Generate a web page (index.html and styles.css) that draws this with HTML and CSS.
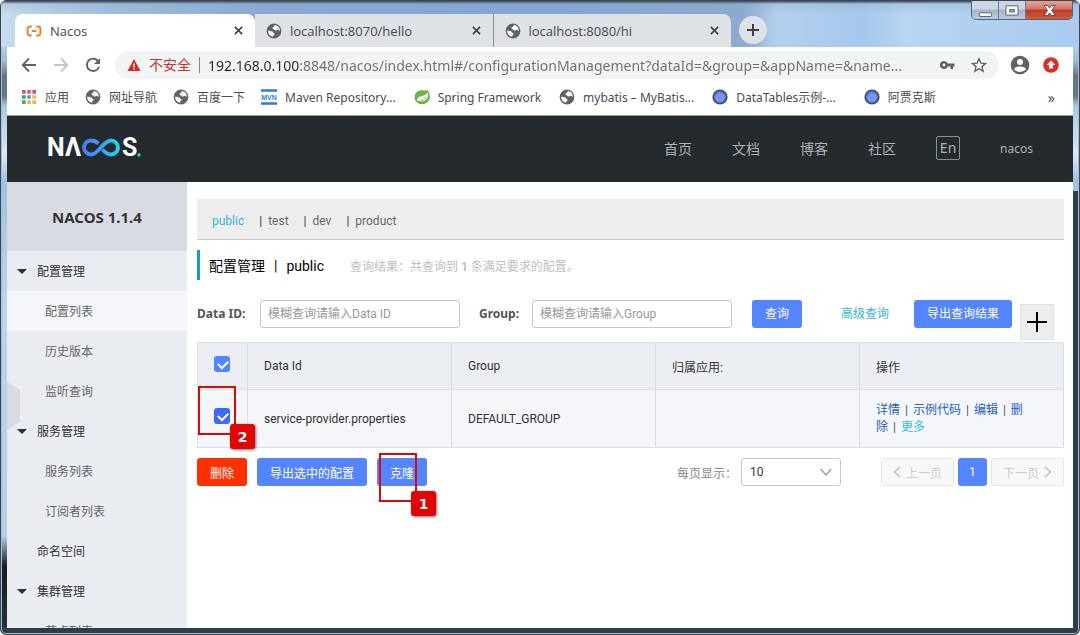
FILE: index.html
```html
<!DOCTYPE html>
<html lang="zh-CN">
<head>
<meta charset="utf-8">
<title>Nacos</title>
<link rel="stylesheet" href="styles.css">
</head>
<body>
<svg class="defs" aria-hidden="true">
  <symbol id="globe" viewBox="0 0 16 16">
    <circle cx="8" cy="8" r="7.4" fill="#5f6368"/>
    <path d="M9.2 1.9C8 2.4 8.6 3.5 7.3 4 6 4.500 6.300 5.400 7.200 5.900 8.500 6.500 8.300 7.300 9.600 7.500c1.200.2 1.400-1 2.400-.8.900.2 1 1.200 1.900 1.100A6 6 0 0 0 9.200 1.900z" fill="#f4f5f6"/>
    <path d="M2.100 7.700c1.700.1 3.200.1 4.300.8.900.6.700 1.500 1.700 1.700.9.200.8 1-.1 1.500-.8.400-.6 1.300-1 2A6 6 0 0 1 2.100 7.700z" fill="#f4f5f6"/>
  </symbol>
  <symbol id="orb" viewBox="0 0 16 16">
    <circle cx="8" cy="8" r="7.600" fill="#3d4770"/>
    <circle cx="8" cy="8" r="6.200" fill="#4f6fca"/>
    <circle cx="8" cy="8.500" r="4.600" fill="#7593e6"/>
    <circle cx="8" cy="8" r="4" fill="none" stroke="#9db4f5" stroke-dasharray="1 1.500"/>
  </symbol>
  <symbol id="close" viewBox="0 0 10 10"><path d="M1 1l8 8M9 1L1 9" stroke="#3c4043" stroke-width="1.800" fill="none"/></symbol>
</svg>
<div class="window">
  <header class="titlebar">
    <nav class="tabs" aria-label="标签页">
      <div class="tab tab-active">
        <svg class="tab-icon" viewBox="0 0 18 16"><path d="M6.500 3H4.500Q1.800 3 1.800 5.700v4.600Q1.800 13 4.500 13h2M11.500 3h2q2.700 0 2.700 2.700v4.600q0 2.700-2.700 2.700h-2M6.500 8h5" fill="none" stroke="#f0802d" stroke-width="2.200"/></svg>
        <a class="tab-title" href="#nacos">Nacos</a>
        <button class="tab-close" aria-label="关闭"><svg viewBox="0 0 10 10"><use href="#close"/></svg></button>
      </div>
      <div class="tab">
        <svg class="tab-icon" viewBox="0 0 16 16"><use href="#globe"/></svg>
        <a class="tab-title" href="#hello">localhost:8070/hello</a>
        <button class="tab-close" aria-label="关闭"><svg viewBox="0 0 10 10"><use href="#close"/></svg></button>
      </div>
      <div class="tab tab-last">
        <svg class="tab-icon" viewBox="0 0 16 16"><use href="#globe"/></svg>
        <a class="tab-title" href="#hi">localhost:8080/hi</a>
        <button class="tab-close" aria-label="关闭"><svg viewBox="0 0 10 10"><use href="#close"/></svg></button>
      </div>
    </nav>
    <button class="new-tab" aria-label="新标签页"><svg viewBox="0 0 14 14"><path d="M7 1v12M1 7h12" stroke="#3c4043" stroke-width="2"/></svg></button>
    <div class="window-controls">
      <button class="control" aria-label="最小化"><svg viewBox="0 0 28 19"><rect x="8" y="12" width="13" height="4" rx="1" fill="#fff" stroke="#4d5a70"/></svg></button>
      <button class="control" aria-label="最大化"><svg viewBox="0 0 28 19"><path d="M7.500 4.500h13v10h-13zM11.500 8.500v2.500h5V8.500z" fill="#fff" fill-rule="evenodd" stroke="#4d5a70"/></svg></button>
      <button class="control control-close" aria-label="关闭窗口"><svg viewBox="0 0 46 19"><path d="M18 4.500h3.700l1.900 2.600 1.900-2.600h3.700L25.700 9.500l3.700 5h-3.900l-1.900-2.600-1.900 2.600h-3.900l3.700-5z" fill="#fff" stroke="#6b3a3a" stroke-width=".9"/></svg></button>
    </div>
  </header>

  <div class="toolbar">
    <button class="tool" aria-label="后退"><svg viewBox="0 0 16 16"><path d="M15 8H2M8 1.500L1.700 8 8 14.500" fill="none" stroke="#5f6368" stroke-width="1.800"/></svg></button>
    <button class="tool" aria-label="前进"><svg viewBox="0 0 16 16"><path d="M1 8h13M8 1.500L14.300 8 8 14.500" fill="none" stroke="#c3c5c8" stroke-width="1.800"/></svg></button>
    <button class="tool" aria-label="重新加载"><svg viewBox="0 0 16 16"><path d="M13.600 5A6.200 6.200 0 1 0 14 9.700" fill="none" stroke="#5f6368" stroke-width="1.900"/><path d="M15 1v6H9z" fill="#5f6368"/></svg></button>
    <div class="address">
      <svg class="warn" viewBox="0 0 14 14"><path d="M7 1l6.500 12H.5z" fill="#d02f25"/><path d="M7 5.500v4M7 10.500v1.300" stroke="#fff" stroke-width="1.300"/></svg>
      <label class="insecure" for="url">不安全</label>
      <input class="url" id="url" value="192.168.0.100:8848/nacos/index.html#/configurationManagement?dataId=&amp;group=&amp;appName=&amp;name...">
      <svg class="key" viewBox="0 0 16 12"><path d="M5 2a4 4 0 1 0 3.700 5.500h2.800V10H14V7.500h1.500v-3H8.700A4 4 0 0 0 5 2zm0 2.600a1.400 1.400 0 1 1 0 2.800 1.400 1.400 0 0 1 0-2.800z" fill="#5f6368" fill-rule="evenodd"/></svg>
      <svg class="star" viewBox="0 0 16 16"><path d="M8 1.800l1.900 4.300 4.700.4-3.600 3.100 1.100 4.600L8 11.700l-4.100 2.500L5 9.600 1.400 6.500l4.700-.4z" fill="none" stroke="#5f6368" stroke-width="1.400"/></svg>
    </div>
    <button class="profile" aria-label="用户"><svg viewBox="0 0 20 20"><circle cx="10" cy="10" r="9.300" fill="#5f6368"/><circle cx="10" cy="7" r="3" fill="#fff"/><path d="M4 14.200Q5 11.600 10 11.600t6 2.600Q13.500 17 10 17t-6-2.800z" fill="#fff"/></svg></button>
    <button class="update" aria-label="更新"><svg viewBox="0 0 16 16"><circle cx="8" cy="8" r="7.800" fill="#d93025"/><path d="M8 3.600l4.200 4.300H10v3.600H6V7.900H3.800z" fill="#fff"/></svg></button>
  </div>

  <nav class="bookmarks" aria-label="书签">
    <a href="#apps"><svg viewBox="0 0 16 16"><path d="M1 1h4v4H1zM6 1h4v4H6zM11 1h4v4h-4z" fill="#d95767"/><path d="M1 6h4v4H1z" fill="#43a35b"/><path d="M6 6h4v4H6z" fill="#4f90df"/><path d="M11 6h4v4h-4z" fill="#e9bd49"/><path d="M1 11h4v4H1z" fill="#4aa768"/><path d="M6 11h4v4H6zM11 11h4v4h-4z" fill="#ebb54e"/><path d="M5.500 0v16M10.500 0v16M0 5.500h16M0 10.500h16" stroke="#fff" stroke-width="1.600"/></svg>应用</a>
    <a href="#nav"><svg viewBox="0 0 16 16"><use href="#globe"/></svg>网址导航</a>
    <a href="#baidu"><svg viewBox="0 0 16 16"><use href="#globe"/></svg>百度一下</a>
    <a class="latin" href="#maven"><svg viewBox="0 0 16 16"><path d="M0 1.500h16M0 14.500h16" stroke="#2d7fd0" stroke-width="2.400"/><text class="mvn" x="8" y="11" text-anchor="middle">MVN</text></svg>Maven Repository...</a>
    <a class="latin" href="#spring"><svg viewBox="0 0 16 16"><path d="M14 1.200c3 5.500 2.300 10.500-2 13-4 2.200-9.300.7-11-3.500C-.500 5.700 2.500 1.700 7 1.300c2.600-.2 4.600.8 7-.1z" fill="#6db33f"/><path d="M13.800 3.500c-2.100 3-5 3.200-7.500 3.900C3.600 8.200 2.600 10 3.300 12c3.200 1.100 6.600.6 8.700-1.300 2-1.800 2.500-4.300 1.800-7.200z" fill="#fff"/><path d="M3 12.700c3.500 0 7.500-1.300 9.600-5" stroke="#6db33f" fill="none"/></svg>Spring Framework</a>
    <a class="latin" href="#mybatis"><svg viewBox="0 0 16 16"><use href="#globe"/></svg>mybatis – MyBatis...</a>
    <a class="latin bookmark-wide" href="#datatables"><svg viewBox="0 0 16 16"><use href="#orb"/></svg>DataTables示例-...</a>
    <a href="#ajax"><svg viewBox="0 0 16 16"><use href="#orb"/></svg>阿贾克斯</a>
    <button class="more-bookmarks" aria-label="更多书签">»</button>
  </nav>

  <div class="page">
    <header class="site-header">
      <a class="logo" href="#home" aria-label="NACOS">
        <svg viewBox="0 0 94 36">
          <defs><linearGradient id="flow" x1="34" y1="0" x2="74" y2="0" gradientUnits="userSpaceOnUse"><stop offset="0" stop-color="#4a79fb"/><stop offset=".5" stop-color="#3e9ef2"/><stop offset="1" stop-color="#16dfe6"/></linearGradient></defs>
          <text class="logo-letter" x="0" y="25">N</text>
          <text class="logo-letter" x="18" y="25">Λ</text>
          <path d="M51.500 12.500C49 10.300 46.500 9.500 44 9.500a7 7 0 0 0 0 14c7.500 0 12-14 20-14a7 7 0 0 1 0 14c-3 0-5.500-1.500-8.500-5" fill="none" stroke="url(#flow)" stroke-width="3.800"/>
          <text class="logo-letter" x="75" y="25">S</text>
          <circle cx="92" cy="24" r="1.700" fill="#16dfe6"/>
        </svg>
      </a>
      <nav class="site-nav">
        <a href="#home">首页</a>
        <a href="#docs">文档</a>
        <a href="#blog">博客</a>
        <a href="#community">社区</a>
        <button class="language">En</button>
        <a class="user" href="#user">nacos</a>
      </nav>
    </header>

    <div class="body">
      <aside class="sidebar">
        <h1 class="version">NACOS 1.1.4</h1>
        <nav class="menu">
          <a class="menu-group" href="#config">配置管理</a>
          <a class="menu-item menu-current" href="#configlist">配置列表</a>
          <a class="menu-item" href="#history">历史版本</a>
          <a class="menu-item" href="#listen">监听查询</a>
          <a class="menu-group" href="#service">服务管理</a>
          <a class="menu-item" href="#servicelist">服务列表</a>
          <a class="menu-item" href="#subscribers">订阅者列表</a>
          <a class="menu-plain" href="#namespace">命名空间</a>
          <a class="menu-group" href="#cluster">集群管理</a>
          <a class="menu-item" href="#nodes">节点列表</a>
        </nav>
        <button class="collapse" aria-label="收起菜单"></button>
      </aside>

      <main class="content">
        <nav class="namespaces">
          <a class="ns-current" href="#public">public</a>
          <span class="bar">|</span><a href="#test">test</a>
          <span class="bar">|</span><a href="#dev">dev</a>
          <span class="bar">|</span><a href="#product">product</a>
        </nav>
        <div class="heading">
          <h2>配置管理<span class="heading-bar">|</span>public</h2>
          <p>查询结果：共查询到 <strong>1</strong> 条满足要求的配置。</p>
        </div>
        <form class="query">
          <label class="label-id" for="dataid">Data ID:</label>
          <input class="field" id="dataid" placeholder="模糊查询请输入Data ID">
          <label class="label-group" for="group">Group:</label>
          <input class="field" id="group" placeholder="模糊查询请输入Group">
          <button class="btn search" type="button">查询</button>
          <a class="advanced" href="#advanced">高级查询</a>
          <button class="btn" type="button">导出查询结果</button>
          <button class="add" type="button" aria-label="新建配置"><svg viewBox="0 0 20 20"><path d="M10 0v20M0 10h20" stroke="#000" stroke-width="2"/></svg></button>
        </form>
        <table class="configs">
          <thead>
            <tr>
              <th class="col-check"><input class="check" type="checkbox" checked aria-label="全选"></th>
              <th>Data Id</th>
              <th>Group</th>
              <th>归属应用:</th>
              <th>操作</th>
            </tr>
          </thead>
          <tbody>
            <tr>
              <td class="col-check"><input class="check check-hover" type="checkbox" checked aria-label="选择配置"><span class="mark mark-row"><b>2</b></span></td>
              <td>service-provider.properties</td>
              <td>DEFAULT_GROUP</td>
              <td></td>
              <td class="actions"><a href="#detail">详情</a><i>|</i><a href="#sample">示例代码</a><i>|</i><a href="#edit">编辑</a><i>|</i><a href="#delete">删除</a><i>|</i><a class="more" href="#more">更多</a></td>
            </tr>
          </tbody>
        </table>
        <div class="footer">
          <button class="btn danger">删除</button>
          <button class="btn">导出选中的配置</button>
          <div class="clone"><button class="btn">克隆</button><span class="mark mark-clone"><b>1</b></span></div>
          <label class="size-label" for="size">每页显示：</label>
          <div class="select">
            <select id="size"><option>10</option></select>
            <svg viewBox="0 0 12 8"><path d="M.7 1L6 7l5.300-6" fill="none" stroke="#999" stroke-width="1.300"/></svg>
          </div>
          <nav class="pager">
            <button class="page-step" disabled><svg viewBox="0 0 8 12"><path d="M7 1L1.500 6 7 11" fill="none" stroke="#bbb" stroke-width="1.300"/></svg>上一页</button>
            <button class="page-current">1</button>
            <button class="page-step" disabled>下一页<svg viewBox="0 0 8 12"><path d="M1 1l5.500 5L1 11" fill="none" stroke="#bbb" stroke-width="1.300"/></svg></button>
          </nav>
        </div>
      </main>
    </div>
  </div>
</div>
</body>
</html>
```

FILE: styles.css
```css
* { box-sizing: border-box; }

body {
  margin: 0;
  font-family: "Noto Sans", "Noto Sans CJK SC", sans-serif;
  font-size: 12px;
  color: #333;
}

a { color: inherit; text-decoration: none; }

button {
  margin: 0;
  padding: 0;
  border: 0;
  background: none;
  color: inherit;
  font: inherit;
}

svg { display: block; flex: none; }
.defs { position: absolute; width: 0; height: 0; }

/* Window frame */
.window {
  display: flex;
  flex-direction: column;
  height: 100vh;
  padding: 0 6px 6px;
  overflow: hidden;
  border: 1px solid #3b4655;
  border-radius: 6px;
  box-shadow: inset 0 0 0 1px #a9bccd;
  background:
    linear-gradient(90deg, transparent 50%, #2f3d49 50%) 0 190px / 100% 100% no-repeat,
    linear-gradient(transparent 0, transparent 626px, #2f3d49 626px),
    linear-gradient(#b4d0ee 0, #b4d0ee 46px, #9ebbd8 60px, #687281 75px, #697587 95px, #a9cae8 105px, #dbe6f2 155px, #9fc1e6 180px, #b9d5f1 300px, #b3d0ee 535px, #171b22 565px, #28333e 100%);
}

/* Tabs */
.titlebar {
  display: flex;
  flex: none;
  height: 46px;
  margin: 0 -6px;
  padding: 0 6px 0 14px;
  background:
    linear-gradient(#3d4658 0, #8fabca55 3px, transparent 14px),
    linear-gradient(90deg, #c9dcee 0, #a2bfe0 10%, #86a8d2 25%, #7ea5d5 50%, #8babcf 69%, #b4d0ef 72%, #a5c8ec 80%, #b8d5f3 84%, #a8cbef 100%);
}
.tabs { display: flex; flex: 0 1 716px; padding-top: 13px; }
.tab {
  display: flex;
  flex: 1 1 0;
  align-items: center;
  min-width: 0;
  padding: 0 12px 0 11px;
  background: #dee1e6;
  font-family: "Open Sans", "Noto Sans CJK SC", sans-serif;
  font-size: 13px;
  color: #45494d;
}
.tab-active { flex: 0 1 240px; border-radius: 8px 8px 0 0; background: #fff; }
.tab-last { border-left: 1px solid #8d9197; border-radius: 0 8px 0 0; }
.tab-icon { width: 16px; height: 16px; }
.tab-title { flex: 1; margin-left: 8px; overflow: hidden; white-space: nowrap; }
.tab-close svg { width: 9px; height: 9px; }
.new-tab {
  display: grid;
  place-items: center;
  flex: none;
  width: 28px;
  height: 28px;
  margin: 15px 0 0 8px;
  border-radius: 50%;
  background: #dee1e6;
}
.new-tab svg { width: 14px; height: 14px; }
.window-controls {
  display: flex;
  flex: none;
  height: 19px;
  margin-left: auto;
  overflow: hidden;
  border: 1px solid #56647a;
  border-top: 0;
  border-radius: 0 0 5px 5px;
}
.control { width: 27px; background: linear-gradient(#cbd6e4 45%, #a3b3c9 50%, #b9cade); border-right: 1px solid #6b7a90; }
.control svg { width: 100%; height: 19px; }
.control-close { width: 46px; border: 0; background: linear-gradient(#e3a596 0, #d27867 45%, #bd3a26 50%, #cf5b3e); }

/* Toolbar */
.toolbar {
  display: flex;
  flex: none;
  align-items: center;
  height: 36px;
  padding: 0 14px;
  background: #fff;
}
.tool { width: 16px; margin-right: 16px; }
.tool svg { width: 16px; height: 16px; }
.address {
  display: flex;
  flex: 1;
  align-items: center;
  min-width: 0;
  height: 28px;
  margin-left: -2px;
  padding: 0 12px;
  border-radius: 14px;
  background: #f1f3f4;
}
.warn { width: 14px; height: 14px; margin-right: 8px; }
.insecure { flex: none; padding-right: 8px; border-right: 1px solid #80868b; font-size: 14px; line-height: 16px; color: #c5362c; }
.url {
  flex: 1;
  min-width: 0;
  margin: 0 12px 0 8px;
  padding: 0;
  border: 0;
  outline: 0;
  background: linear-gradient(90deg, #26282b 0, #26282b 91px, #6c7074 91px);
  background-clip: text;
  -webkit-text-fill-color: transparent;
  color: #5f6368;
  font: inherit;
  font-size: 14px;
}
.key { width: 16px; height: 12px; margin-right: 16px; }
.star { width: 16px; height: 16px; }
.profile { margin-left: 11px; }
.profile svg { width: 20px; height: 20px; }
.update { margin-left: 13px; }
.update svg { width: 16px; height: 16px; }

/* Bookmarks */
.bookmarks {
  display: flex;
  flex: none;
  align-items: center;
  gap: 16px;
  height: 33px;
  padding: 0 18px 4px 14px;
  border-bottom: 1px solid #9aa0a0;
  background: #fff;
  white-space: nowrap;
  color: #4a4d51;
}
.bookmarks a { display: flex; align-items: center; gap: 8px; }
.bookmarks svg { width: 16px; height: 16px; }
.bookmarks .latin { margin-right: 2px; }
.bookmarks .bookmark-wide { margin-right: 12px; }
.mvn { font: bold 7px "Liberation Sans", sans-serif; fill: #2d7fd0; }
.more-bookmarks { margin-left: auto; font-size: 14px; }

/* Site header */
.page {
  display: flex;
  flex: 1;
  flex-direction: column;
  min-height: 0;
  overflow: hidden;
  background: #fff;
  font-family: Roboto, "Noto Sans CJK SC", sans-serif;
}
.site-header {
  display: flex;
  flex: none;
  align-items: center;
  justify-content: space-between;
  height: 66px;
  padding: 0 40px;
  background: #252a2f;
  color: #b0b3b6;
}
.logo svg { width: 94px; height: 36px; }
.logo-letter { font: bold 25px Roboto, sans-serif; fill: #fff; }
.site-nav {
  display: flex;
  align-items: center;
  gap: 40px;
  padding-bottom: 2px;
  font-family: "Noto Sans", "Noto Sans CJK SC", sans-serif;
  font-size: 14px;
}
.language { width: 24px; height: 24px; border: 1px solid #8c9093; border-radius: 2px; line-height: 20px; }
.site-nav .user { font-size: 12px; }

/* Sidebar */
.body { display: flex; flex: 1; min-height: 0; }
.sidebar {
  position: relative;
  flex: 0 0 180px;
  overflow: hidden;
  background: #e9ecf1;
  font-family: "Noto Sans", "Noto Sans CJK SC", sans-serif;
}
.version {
  display: grid;
  place-items: center;
  height: 69px;
  margin: 0;
  background: #d9dbe3;
  font: bold 15px "Noto Sans", sans-serif;
}
.menu { display: flex; flex-direction: column; }
.menu a { display: flex; align-items: center; height: 40px; padding-left: 30px; }
.menu .menu-item { padding-left: 38px; color: #666; }
.menu .menu-current { background: #f4f6fa; }
.menu .menu-group { gap: 10px; padding-left: 10px; }
.menu-group::before { content: ""; border: 5px solid transparent; border-top-color: #263238; border-bottom-width: 0; }
.collapse {
  position: absolute;
  top: 200px;
  left: 0;
  width: 13px;
  height: 48px;
  background: #d9dbe0;
  clip-path: polygon(0 0, 100% 16%, 100% 84%, 0 100%);
}

/* Content */
.content { flex: 1; min-width: 0; padding: 17px 9px 0 10px; }
.namespaces {
  display: flex;
  align-items: center;
  height: 41px;
  padding: 3px 15px 0;
  border-bottom: 1px solid #ccc;
  background: #ededed;
  color: #666;
}
.namespaces .ns-current { color: #33b5d5; }
.bar { margin: 0 6px 0 15px; color: #333; }
.heading {
  display: flex;
  align-items: center;
  height: 30px;
  margin-top: 10px;
  padding-left: 9px;
  border-left: 3px solid #1a9bc0;
}
.heading h2 { margin: 0; font-size: 14px; font-weight: 400; color: #000; }
.heading-bar { margin: 0 9px; }
.heading p { margin: 0 0 0 26px; color: #c0c0c0; }

.query { display: flex; align-items: flex-start; margin: 20px 0 2px; line-height: 28px; }
.query label { flex: none; font: bold 12px/28px "Noto Sans", sans-serif; color: #555; }
.label-id { width: 63px; }
.query .label-group { width: 53px; margin-left: 19px; }
.field {
  flex: 0 1 200px;
  min-width: 60px;
  height: 28px;
  padding: 0 7px;
  border: 1px solid #c4c6cf;
  border-radius: 3px;
  outline: 0;
  font: inherit;
}
.field::placeholder { color: #999; }
.btn {
  flex: none;
  height: 28px;
  padding: 0 13px;
  border-radius: 3px;
  background: #5584ff;
  color: #fff;
}
.search { margin-left: 20px; }
.advanced { flex: none; margin: 0 25px 0 39px; color: #33b5d5; }
.add {
  display: grid;
  place-items: center;
  flex: none;
  width: 34px;
  height: 36px;
  margin: 4px 0 0 8px;
  border: 1px solid #e2e2e2;
  background: #ededed;
}
.add svg { width: 20px; height: 20px; }

.configs { width: 100%; table-layout: fixed; border-collapse: collapse; }
.configs th, .configs td {
  height: 58px;
  padding: 0 16px;
  border: 1px solid #dcdee3;
  background: #f4f6fa;
  font-weight: 400;
  text-align: left;
}
.configs th { height: 47px; background: #ebeef2; }
.configs .col-check { position: relative; width: 50px; padding: 0 0 5px 16px; }
.check {
  display: block;
  position: relative;
  appearance: none;
  width: 16px;
  height: 16px;
  margin: 0;
  border-radius: 3px;
  background: #5584ff;
}
.check-hover { background: #3b6cf3; }
.check::before {
  content: "";
  position: absolute;
  top: 4px;
  left: 4px;
  width: 8px;
  height: 5px;
  border: solid #fff;
  border-width: 0 0 2px 2px;
  transform: rotate(-45deg);
}
.configs .actions { line-height: 17px; color: #1f5fc4; }
.actions i { margin: 0 5px; font-style: normal; color: #555; }
.actions .more { color: #33c0dc; }

/* Numbered callouts */
.mark { position: absolute; width: 38px; height: 49px; border: 2px solid #d60b0b; pointer-events: none; }
.mark b {
  position: absolute;
  top: 36px;
  left: 30px;
  display: grid;
  place-items: center;
  width: 25px;
  height: 25px;
  border-radius: 3px;
  background: #e10606;
  box-shadow: 1px 1px 3px #0008;
  font: bold 14px "DejaVu Sans", sans-serif;
  color: #fff;
}
.mark-row { top: -4px; left: 0; }
.mark-clone { top: -5px; left: 2px; }

/* Table footer */
.footer { display: flex; align-items: center; margin-top: 10px; }
.footer .btn { margin-right: 10px; }
.footer .danger { background: #ff3000; }
.clone { position: relative; }
.size-label { margin-left: auto; color: #888; }
.select { position: relative; width: 100px; margin: 0 40px 0 4px; }
.select select {
  appearance: none;
  width: 100%;
  height: 28px;
  padding: 0 8px;
  border: 1px solid #c4c6cf;
  border-radius: 3px;
  background: #fff;
  color: #333;
  font: inherit;
}
.select svg { position: absolute; top: 10px; right: 9px; width: 12px; height: 8px; }
.pager { display: flex; gap: 4px; }
.pager button { height: 28px; border-radius: 3px; }
.pager .page-step {
  display: flex;
  align-items: center;
  gap: 5px;
  padding: 0 11px;
  border: 1px solid #e6e7eb;
  background: #f7f8fa;
  color: #ccc;
}
.page-step svg { width: 8px; height: 12px; }
.pager .page-current { width: 29px; background: #5584ff; color: #fff; }
```
